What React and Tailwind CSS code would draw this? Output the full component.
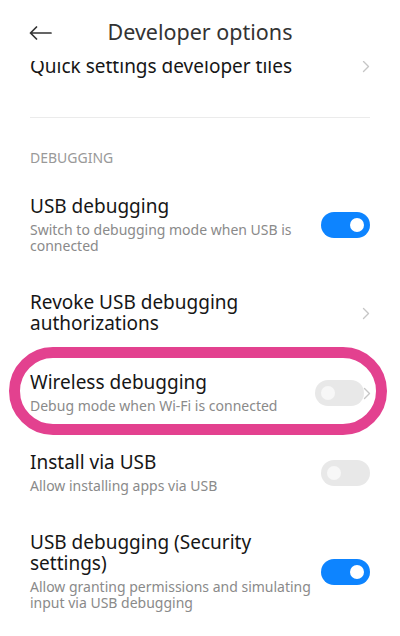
import React from "react";

const Chevron = ({ className = "" }) => (
  <svg width="8" height="13" viewBox="0 0 8 13" className={className} fill="none">
    <path d="M1.5 1.5 L6.5 6.5 L1.5 11.5" stroke="#c6c6c6" strokeWidth="1.4" strokeLinecap="round" strokeLinejoin="round" />
  </svg>
);

const Toggle = ({ on }) =>
  on ? (
    <div className="w-[49px] h-[26px] rounded-full bg-[#0d84ff] flex items-center justify-end pr-[6px] shrink-0">
      <div className="w-[14px] h-[14px] rounded-full bg-white" />
    </div>
  ) : (
    <div className="w-[49px] h-[26px] rounded-full bg-[#e8e8e8] flex items-center justify-start pl-[6px] shrink-0">
      <div className="w-[14px] h-[14px] rounded-full bg-[#f7f7f7]" />
    </div>
  );

const Row = ({ title, subtitle, right }) => (
  <div className="flex items-center justify-between px-[30px] pt-[18px] pb-[20px]">
    <div className="w-[284px]">
      <div className="text-[19px] leading-[21px] text-[#161616]">{title}</div>
      {subtitle && (
        <div className="mt-[5px] text-[14px] leading-[16px] text-[#8a8a8a]">{subtitle}</div>
      )}
    </div>
    {right}
  </div>
);

export default function App() {
  return (
    <div className="relative w-[400px] h-[636px] overflow-hidden bg-white font-['Noto_Sans','Roboto',sans-serif]">
      <div className="relative z-10 bg-white h-[61px] grid grid-cols-[1fr_auto_1fr]">
        <div className="pl-[29px] pt-[26px]">
          <svg width="23" height="14" viewBox="0 0 23 14" fill="none">
            <path d="M22 7 H1.5 M7.5 1 L1.5 7 L7.5 13" stroke="#333" strokeWidth="1.7" strokeLinecap="round" strokeLinejoin="round" />
          </svg>
        </div>
        <div className="pt-[19px] text-[21.5px] leading-[26px] text-[#333]">Developer options</div>
        <div />
      </div>

      <div className="-mt-[23px]">
        <div className="flex items-center justify-between px-[30px] pt-[18px] pb-[20px]">
          <div className="text-[19px] leading-[21px] text-[#161616]">Quick settings developer tiles</div>
          <Chevron />
        </div>
        <div className="mx-[30px] mt-[20px] h-px bg-[#ebebeb]" />
        <div className="px-[30px] pt-[32px] pb-[12px] text-[14px] leading-[16px] text-[#999]">DEBUGGING</div>

        <Row title="USB debugging" subtitle="Switch to debugging mode when USB is connected" right={<Toggle on />} />
        <Row title="Revoke USB debugging authorizations" right={<Chevron />} />
        <Row
          title="Wireless debugging"
          subtitle="Debug mode when Wi-Fi is connected"
          right={
            <div className="flex items-center -mr-[1px]">
              <Toggle on={false} />
              <Chevron className="-ml-[1px]" />
            </div>
          }
        />
        <Row title="Install via USB" subtitle="Allow installing apps via USB" right={<Toggle on={false} />} />
        <Row
          title="USB debugging (Security settings)"
          subtitle="Allow granting permissions and simulating input via USB debugging"
          right={<Toggle on />}
        />
      </div>

      <div className="absolute left-[9px] top-[347px] w-[378px] h-[88px] rounded-full border-[11px] border-[#e3418f] pointer-events-none" />
    </div>
  );
}
